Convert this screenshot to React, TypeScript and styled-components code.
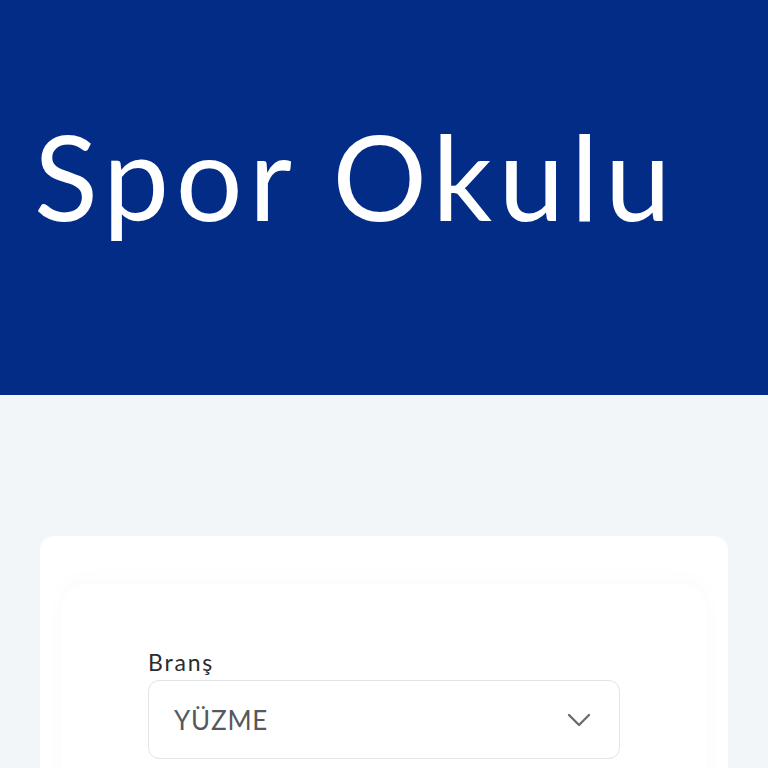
import React from "react";
import styled, { createGlobalStyle } from "styled-components";

const GlobalStyle = createGlobalStyle`
  html, body {
    margin: 0;
    padding: 0;
    background: #f3f6f9;
    font-family: "Lato", "Noto Sans", sans-serif;
    overflow: hidden;
  }
  * { box-sizing: border-box; }
`;

const Page = styled.div`
  width: 768px;
  height: 768px;
  overflow: hidden;
  background: #f3f6f9;
`;

const Hero = styled.header`
  height: 395px;
  background: #022c86;
  padding: 106px 0 0 34px;
`;

const Title = styled.h1`
  margin: 0;
  color: #ffffff;
  font-family: "Lato", sans-serif;
  font-weight: 400;
  font-size: 118px;
  line-height: 140px;
  letter-spacing: 6.4px;
`;

const Main = styled.main`
  padding: 141px 40px 0;
`;

const Card = styled.section`
  background: #ffffff;
  border-radius: 14px;
  padding: 48px 22px 0;
  height: 400px;
`;

const Inner = styled.div`
  border-radius: 24px;
  box-shadow: 0 -4px 22px rgba(20, 40, 80, 0.022);
  padding: 67px 86px 0;
  height: 400px;
`;

const Field = styled.div`
  display: flex;
  flex-direction: column;
  gap: 6px;
  margin-bottom: 6px;
`;

const Label = styled.label`
  font-family: "Lato", sans-serif;
  font-size: 23px;
  font-weight: 400;
  color: #2a2c30;
  line-height: 23px;
  letter-spacing: 1.8px;
`;

const Select = styled.div`
  height: 79px;
  width: 472px;
  border: 1px solid #e2e4e8;
  border-radius: 11px;
  display: flex;
  align-items: center;
  justify-content: space-between;
  padding: 0 28px 0 25px;
`;

const Value = styled.span`
  font-family: "Lato", sans-serif;
  font-size: 26px;
  color: #55585e;
  letter-spacing: 0.8px;
`;

const Chevron = () => (
  <svg width="24" height="14" viewBox="0 0 24 14" fill="none">
    <path d="M2 2 L12 12 L22 2" stroke="#6a6d73" strokeWidth="2.4" strokeLinecap="round" strokeLinejoin="round" />
  </svg>
);

export default function App() {
  return (
    <Page>
      <GlobalStyle />
      <Hero>
        <Title>Spor Okulu</Title>
      </Hero>
      <Main>
        <Card>
          <Inner>
            <Field>
              <Label>Branş</Label>
              <Select>
                <Value>YÜZME</Value>
                <Chevron />
              </Select>
            </Field>
            <Field>
              <Label>Tesis</Label>
            </Field>
          </Inner>
        </Card>
      </Main>
    </Page>
  );
}
